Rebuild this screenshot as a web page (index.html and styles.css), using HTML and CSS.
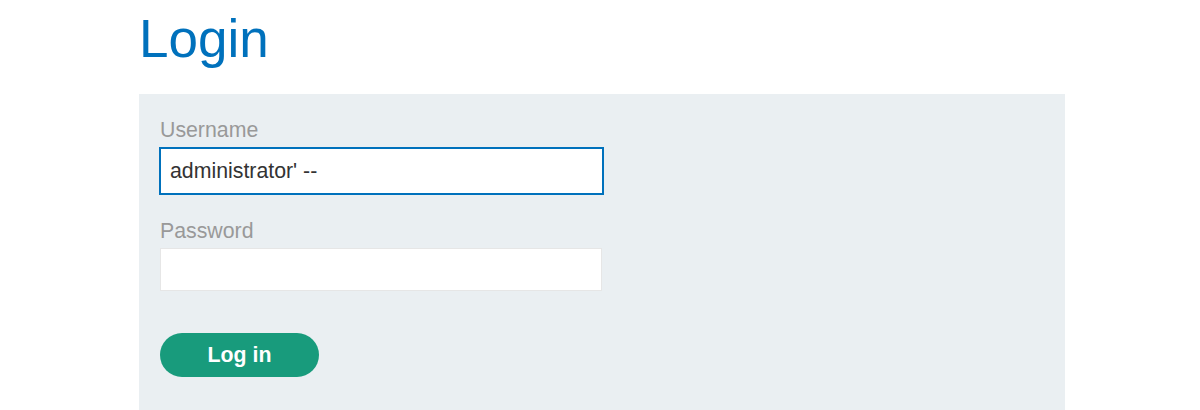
FILE: index.html
```html
<!DOCTYPE html>
<html>
<head>
<meta charset="utf-8">
<link rel="stylesheet" href="styles.css">
</head>
<body>
<div class="container">
  <h1 class="title">Login</h1>
  <section class="panel">
    <form class="login-form">
      <label class="label" for="username">Username</label>
      <input class="field field-active" id="username" type="text" value="administrator' --">
      <label class="label" for="password">Password</label>
      <input class="field" id="password" type="password">
      <button class="button" type="button">Log in</button>
    </form>
  </section>
</div>
</body>
</html>
```
FILE: styles.css
```css
html, body {
  margin: 0;
  padding: 0;
  background: #fff;
  font-family: "Liberation Sans", Arial, sans-serif;
}
.container {
  width: 926px;
  margin-left: 139px;
}
.title {
  margin: 0;
  padding-top: 8px;
  height: 94px;
  box-sizing: border-box;
  font-size: 53px;
  font-weight: normal;
  line-height: 62px;
  color: #0071bc;
}
.panel {
  background: #eaeff2;
  padding: 18px 21px 40px 21px;
  height: 330px;
  box-sizing: border-box;
}
.login-form {
  display: flex;
  flex-direction: column;
  align-items: flex-start;
}
.label {
  font-size: 21.3px;
  color: #999;
  line-height: 33px;
  margin-top: 2px;
}
.field {
  width: 50%;
  height: 43px;
  box-sizing: border-box;
  border: 1px solid #e6e6e6;
  background: #fff;
  font-family: "Liberation Sans", Arial, sans-serif;
  font-size: 21.3px;
  color: #333;
  padding: 0 9px;
  margin: 0 0 20px 0;
  outline: none;
}
.field-active {
  width: calc(50% + 3px);
  height: 48px;
  border: 2px solid #0071bc;
  margin: 0 0 18px -1px;
}
.button {
  margin-top: 22px;
  width: 159px;
  height: 44px;
  border: none;
  border-radius: 22px;
  background: #189b7c;
  color: #fff;
  font-family: "Liberation Sans", Arial, sans-serif;
  font-weight: bold;
  font-size: 21.3px;
}
```
